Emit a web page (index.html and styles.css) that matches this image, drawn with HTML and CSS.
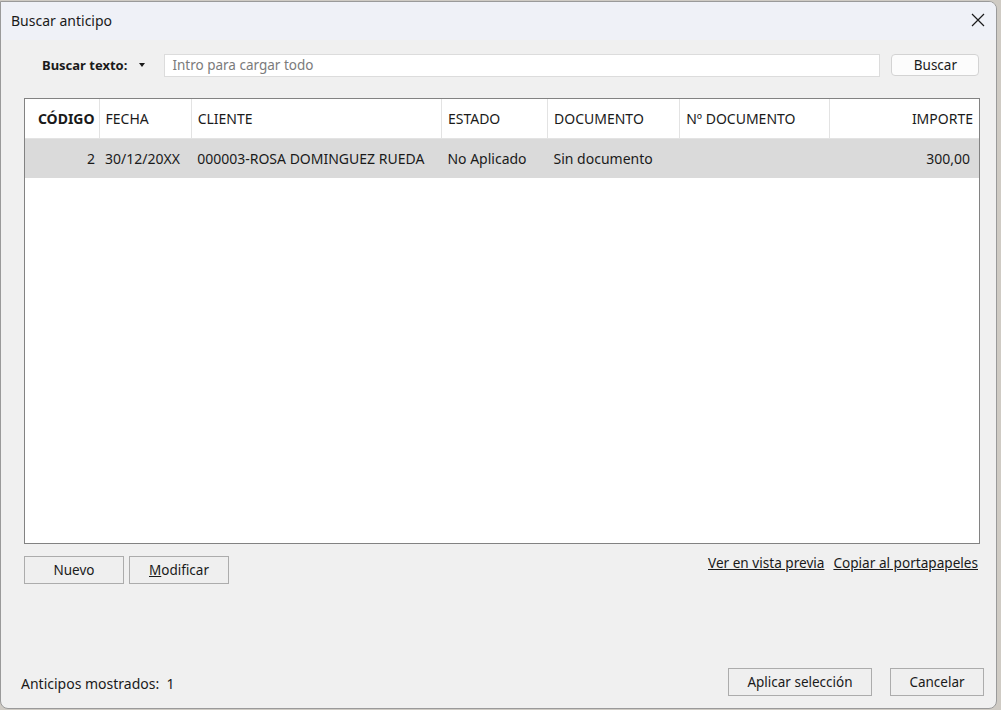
FILE: index.html
```html
<!DOCTYPE html>
<html lang="es">
<head>
    <meta charset="UTF-8">
    <title>Buscar anticipo</title>
    <link rel="stylesheet" href="styles.css">
</head>
<body>
    <div class="window">
        <header class="titlebar">
            <span class="title">Buscar anticipo</span>
            <svg class="close" width="14" height="14" viewBox="0 0 14 14">
                <path d="M1 1 L13 13 M13 1 L1 13" stroke="#1b1b1b" stroke-width="1.2" fill="none"/>
            </svg>
        </header>

        <div class="content">
            <div class="search-row">
                <span class="search-label">Buscar texto:</span>
                <span class="caret"></span>
                <input class="search-input" type="text" placeholder="Intro para cargar todo">
                <button class="btn btn-round">Buscar</button>
            </div>

            <div class="grid">
                <table>
                    <colgroup>
                        <col style="width:74px">
                        <col style="width:92px">
                        <col style="width:250px">
                        <col style="width:106px">
                        <col style="width:132px">
                        <col style="width:150px">
                        <col style="width:149px">
                    </colgroup>
                    <thead>
                        <tr>
                            <th class="num strong">CÓDIGO</th>
                            <th>FECHA</th>
                            <th>CLIENTE</th>
                            <th>ESTADO</th>
                            <th>DOCUMENTO</th>
                            <th>Nº DOCUMENTO</th>
                            <th class="num">IMPORTE</th>
                        </tr>
                    </thead>
                    <tbody>
                        <tr class="selected">
                            <td class="num">2</td>
                            <td>30/12/20XX</td>
                            <td>000003-ROSA DOMINGUEZ RUEDA</td>
                            <td>No Aplicado</td>
                            <td>Sin documento</td>
                            <td></td>
                            <td class="num amount">300,00</td>
                        </tr>
                    </tbody>
                </table>
            </div>

            <div class="grid-actions">
                <div class="left-buttons">
                    <button class="btn btn-square">Nuevo</button>
                    <button class="btn btn-square"><u>M</u>odificar</button>
                </div>
                <div class="links">
                    <a href="#">Ver en vista previa</a>
                    <a href="#">Copiar al portapapeles</a>
                </div>
            </div>
        </div>

        <footer class="footer">
            <span class="count">Anticipos mostrados:&nbsp; 1</span>
            <div class="footer-buttons">
                <button class="btn btn-square btn-apply">Aplicar selección</button>
                <button class="btn btn-square btn-cancel">Cancelar</button>
            </div>
        </footer>
    </div>
</body>
</html>
```

FILE: styles.css
```css
* {
    margin: 0;
    padding: 0;
    box-sizing: border-box;
}

body {
    background: #cfcbc4;
    font-family: 'Segoe UI', 'Noto Sans', sans-serif;
    font-size: 14px;
    color: #1a1a1a;
    overflow: hidden;
}

/* Fenetre de dialogue */
.window {
    width: 997px;
    height: 708px;
    margin-top: 1px;
    background: #f0f0f0;
    border: 1px solid #9a9a9a;
    border-radius: 0 8px 8px 8px;
    overflow: hidden;
    display: flex;
    flex-direction: column;
}

.titlebar {
    height: 38px;
    flex-shrink: 0;
    background: #eff1f7;
    display: flex;
    align-items: center;
    justify-content: space-between;
    padding: 0 11px 2px 10px;
}

.title {
    font-size: 14px;
    color: #1a1a1a;
}

.close {
    display: block;
}

.content {
    padding: 0 17px 0 23px;
}

/* Ligne de recherche */
.search-row {
    display: flex;
    align-items: center;
    height: 24px;
    margin-top: 13px;
}

.search-label {
    font-weight: bold;
    margin-left: 18px;
    font-size: 13px;
    white-space: nowrap;
    flex-shrink: 0;
}

.caret {
    flex-shrink: 0;
    width: 0;
    height: 0;
    border-left: 3px solid transparent;
    border-right: 3px solid transparent;
    border-top: 4px solid #1a1a1a;
    margin-left: 12px;
}

.search-input {
    flex-shrink: 0;
    width: 716px;
    height: 23px;
    margin-left: 19px;
    border: 1px solid #dcdcdc;
    background: #fff;
    padding: 0 7px;
    font-family: inherit;
    font-size: 13.5px;
    color: #1a1a1a;
    outline: none;
}

.search-input::placeholder {
    color: #7b7b7b;
}

.btn {
    font-family: inherit;
    font-size: 13.5px;
    color: #1a1a1a;
    background: #efefef;
    flex-shrink: 0;
}

.btn-round {
    width: 88px;
    height: 22px;
    margin-left: 11px;
    border: 1px solid #d3d3d3;
    border-radius: 4px;
    background: #fcfcfc;
}

/* Grille des anticipos */
.grid {
    margin-top: 21px;
    width: 956px;
    height: 446px;
    background: #fff;
    border: 1px solid #828282;
}

table {
    border-collapse: collapse;
    table-layout: fixed;
    width: 954px;
}

th {
    height: 39px;
    font-weight: normal;
    text-align: left;
    padding: 0 6px;
    border-right: 1px solid #e3e3e3;
    border-bottom: 1px solid #e3e3e3;
    font-size: 14px;
    white-space: nowrap;
}

th:last-child {
    border-right: none;
}

th.strong {
    font-weight: bold;
    padding-right: 4px;
}

td {
    height: 40px;
    padding: 0 6px;
    font-size: 14px;
    white-space: nowrap;
}

.num {
    text-align: right;
}

td.num {
    padding-right: 4px;
}

td.amount {
    padding-right: 9px;
}

tr.selected td {
    background: #dadada;
}

/* Boutons et liens sous la grille */
.grid-actions {
    display: flex;
    justify-content: space-between;
    align-items: flex-start;
    margin-top: 12px;
}

.left-buttons {
    display: flex;
    gap: 5px;
}

.btn-square {
    height: 28px;
    border: 1px solid #acacac;
    background: #efefef;
}

.left-buttons .btn-square {
    width: 100px;
}

.links {
    display: flex;
    gap: 9px;
    margin-top: -3px;
    padding-right: 1px;
}

.links a {
    color: #1a1a1a;
    text-decoration: underline;
    font-size: 13.6px;
}

/* Pied de la fenetre */
.footer {
    margin-top: auto;
    display: flex;
    justify-content: space-between;
    align-items: center;
    padding: 0 12px 12px 20px;
}

.count {
    font-size: 14px;
    padding-top: 3px;
}

.footer-buttons {
    display: flex;
    gap: 18px;
}

.btn-apply {
    width: 144px;
}

.btn-cancel {
    width: 94px;
}
```
